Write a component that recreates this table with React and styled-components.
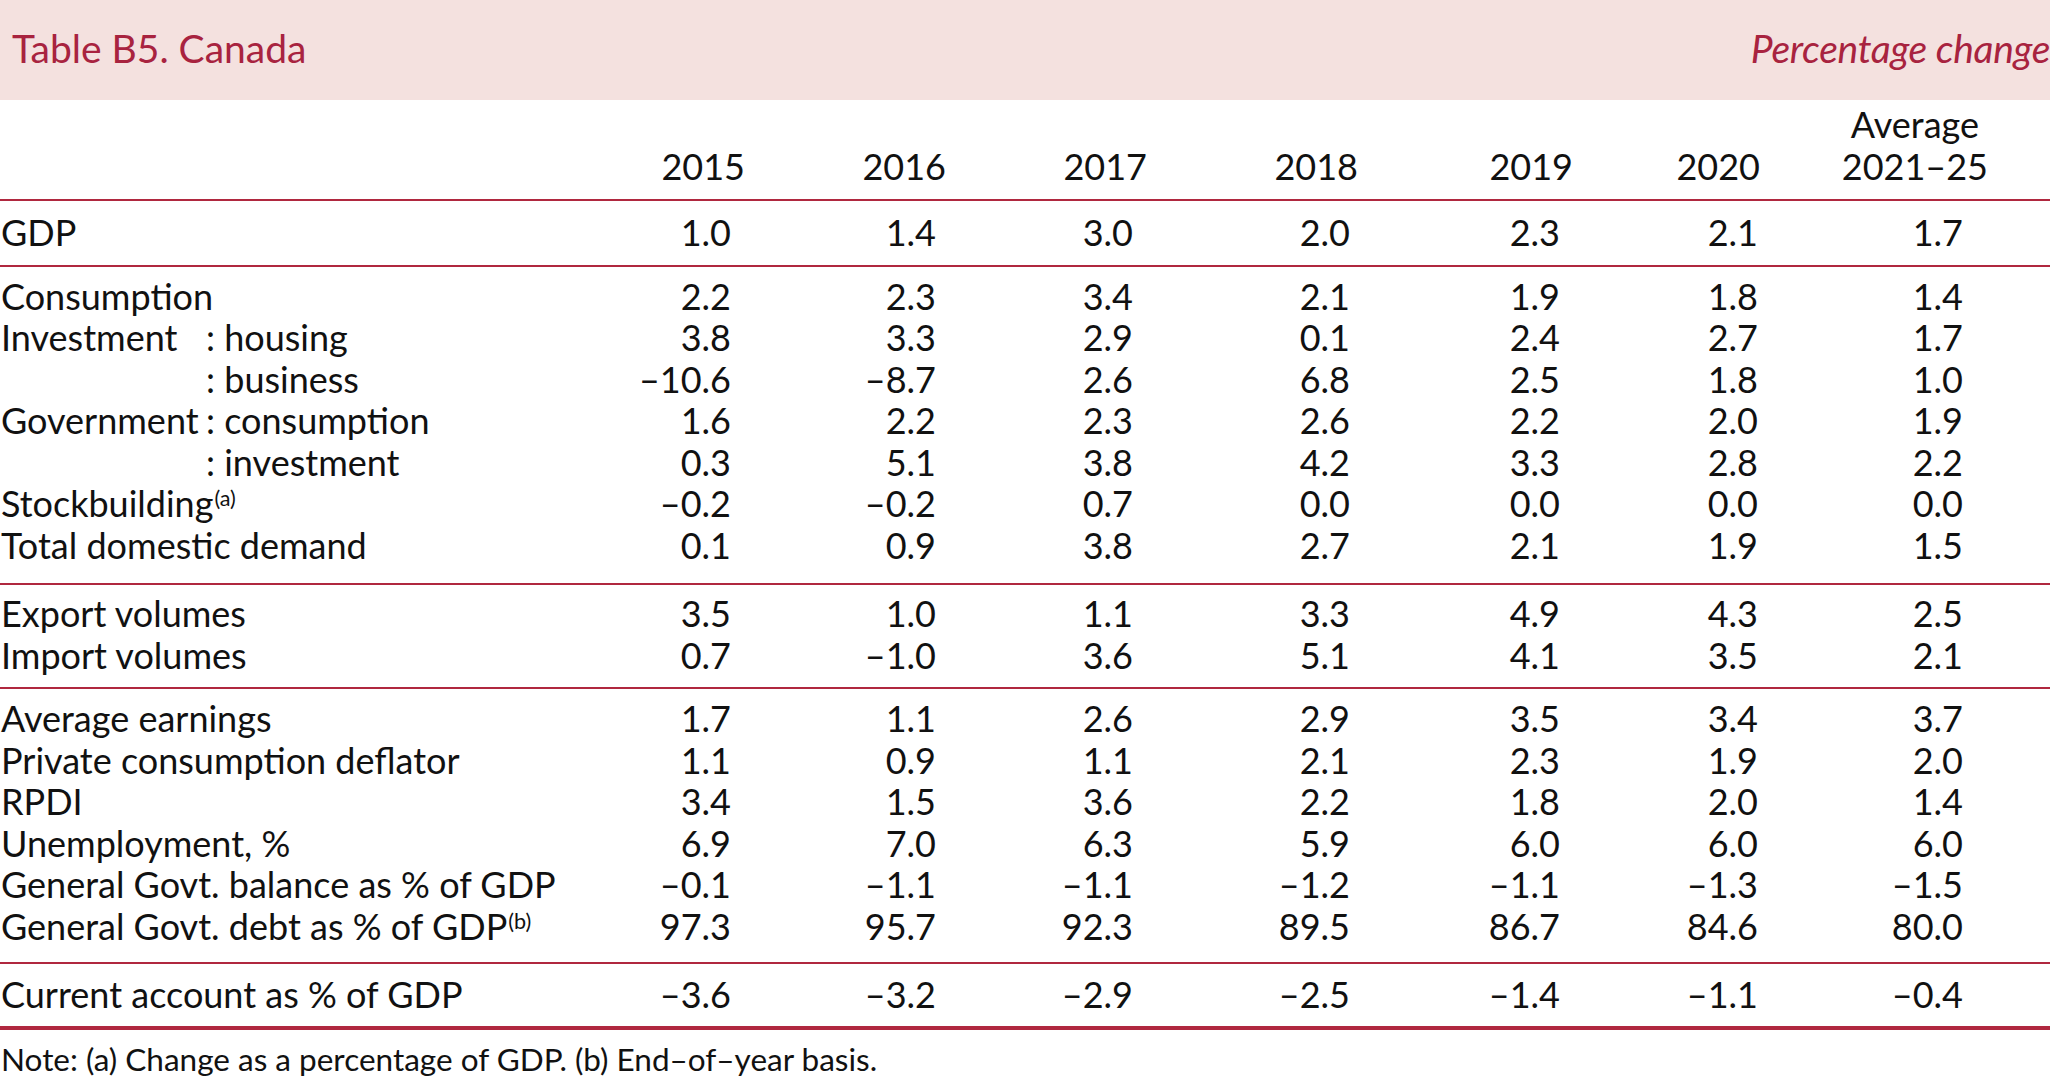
import React from 'react';
import styled, { createGlobalStyle, css } from 'styled-components';

const GlobalStyle = createGlobalStyle`
  html, body {
    margin: 0;
    padding: 0;
    background: #ffffff;
  }
  body {
    font-family: Lato, "Open Sans", sans-serif;
    color: #111111;
  }
`;

// right-edge inset of the figures, per column (px)
const columns = [
    { head: '2015', inset: 14 },
    { head: '2016', inset: 10 },
    { head: '2017', inset: 14 },
    { head: '2018', inset: 8 },
    { head: '2019', inset: 13 },
    { head: '2020', inset: 2 },
    { head: '2021–25', over: 'Average', inset: 25 },
];

const sections = [
    {
        pad: [11, 11],
        rows: [
            { label: 'GDP', values: ['1.0', '1.4', '3.0', '2.0', '2.3', '2.1', '1.7'] },
        ],
    },
    {
        pad: [9, 17],
        rows: [
            { label: 'Consumption', values: ['2.2', '2.3', '3.4', '2.1', '1.9', '1.8', '1.4'] },
            { label: 'Investment', sub: 'housing', values: ['3.8', '3.3', '2.9', '0.1', '2.4', '2.7', '1.7'] },
            { label: '', sub: 'business', values: ['–10.6', '–8.7', '2.6', '6.8', '2.5', '1.8', '1.0'] },
            { label: 'Government', sub: 'consumption', values: ['1.6', '2.2', '2.3', '2.6', '2.2', '2.0', '1.9'] },
            { label: '', sub: 'investment', values: ['0.3', '5.1', '3.8', '4.2', '3.3', '2.8', '2.2'] },
            { label: 'Stockbuilding', note: '(a)', values: ['–0.2', '–0.2', '0.7', '0.0', '0.0', '0.0', '0.0'] },
            { label: 'Total domestic demand', values: ['0.1', '0.9', '3.8', '2.7', '2.1', '1.9', '1.5'] },
        ],
    },
    {
        pad: [8, 11],
        rows: [
            { label: 'Export volumes', values: ['3.5', '1.0', '1.1', '3.3', '4.9', '4.3', '2.5'] },
            { label: 'Import volumes', values: ['0.7', '–1.0', '3.6', '5.1', '4.1', '3.5', '2.1'] },
        ],
    },
    {
        pad: [9, 15],
        rows: [
            { label: 'Average earnings', values: ['1.7', '1.1', '2.6', '2.9', '3.5', '3.4', '3.7'] },
            { label: 'Private consumption deflator', values: ['1.1', '0.9', '1.1', '2.1', '2.3', '1.9', '2.0'] },
            { label: 'RPDI', values: ['3.4', '1.5', '3.6', '2.2', '1.8', '2.0', '1.4'] },
            { label: 'Unemployment, %', values: ['6.9', '7.0', '6.3', '5.9', '6.0', '6.0', '6.0'] },
            { label: 'General Govt. balance as % of GDP', values: ['–0.1', '–1.1', '–1.1', '–1.2', '–1.1', '–1.3', '–1.5'] },
            { label: 'General Govt. debt as % of GDP', note: '(b)', values: ['97.3', '95.7', '92.3', '89.5', '86.7', '84.6', '80.0'] },
        ],
    },
    {
        pad: [10, 10],
        heavy: true,
        rows: [
            { label: 'Current account as % of GDP', values: ['–3.6', '–3.2', '–2.9', '–2.5', '–1.4', '–1.1', '–0.4'] },
        ],
    },
];

const rule = '#b0283f';

const grid = css`
    display: grid;
    grid-template-columns: 545px 200px 201px 201px 211px 215px 187px 228px;
`;

const Page = styled.div`
    width: 2050px;
    overflow: hidden;
`;

const Banner = styled.div`
    display: flex;
    align-items: flex-start;
    height: 100px;
    box-sizing: border-box;
    padding: 24px 0 0 12px;
    background: #f4e1df;
    color: #a8233f;
    font-size: 39px;
    line-height: 48px;
    overflow: hidden;
    white-space: nowrap;
`;

const Title = styled.div`
    flex: 0 0 auto;
`;

const Unit = styled.div`
    margin-left: auto;
    margin-right: 0;
    font-style: italic;
    letter-spacing: -0.3px;
`;

const HeadRow = styled.div`
    ${grid};
    align-items: end;
    height: 101px;
    box-sizing: border-box;
    padding-bottom: 12px;
    border-bottom: 2px solid ${rule};
    font-size: 36px;
    line-height: 42px;
`;

const HeadCell = styled.div`
    text-align: right;
`;

const Stack = styled.span`
    display: inline-block;
    text-align: center;
`;

const Section = styled.div`
    padding: ${p => p.$pad[0]}px 0 ${p => p.$pad[1]}px;
    border-bottom: ${p => (p.$heavy ? 4 : 2)}px solid ${rule};
`;

const Row = styled.div`
    ${grid};
    font-size: 36px;
    line-height: 41.5px;
`;

const LabelCell = styled.div`
    display: flex;
    white-space: nowrap;
    padding-left: 1px;
`;

const Main = styled.span`
    flex: 0 0 ${p => (p.$split ? '205px' : 'auto')};
`;

const Sub = styled.span`
    white-space: pre;
`;

const Note = styled.sup`
    font-size: 0.6em;
    vertical-align: 0.5em;
    line-height: 0;
    margin-left: 1px;
`;

const NumCell = styled.div`
    text-align: right;
    padding-right: ${p => p.$inset}px;
`;

const Footnote = styled.div`
    margin-top: 11px;
    padding-left: 1px;
    font-size: 31.5px;
    line-height: 36px;
`;

const App = () => (
    <Page>
        <GlobalStyle />
        <Banner>
            <Title>Table B5. Canada</Title>
            <Unit>Percentage change</Unit>
        </Banner>

        <HeadRow>
            <div />
            {columns.map(col => (
                <HeadCell key={col.head}>
                    {col.over ? (
                        <Stack>
                            {col.over}
                            <br />
                            {col.head}
                        </Stack>
                    ) : col.head}
                </HeadCell>
            ))}
        </HeadRow>

        {sections.map((section, i) => (
            <Section key={i} $pad={section.pad} $heavy={section.heavy}>
                {section.rows.map((row, j) => (
                    <Row key={j}>
                        <LabelCell>
                            <Main $split={!!row.sub}>
                                {row.label}
                                {row.note && <Note>{row.note}</Note>}
                            </Main>
                            {row.sub && <Sub>{': ' + row.sub}</Sub>}
                        </LabelCell>
                        {row.values.map((v, k) => (
                            <NumCell key={k} $inset={columns[k].inset}>{v}</NumCell>
                        ))}
                    </Row>
                ))}
            </Section>
        ))}

        <Footnote>Note: (a) Change as a percentage of GDP. (b) End–of–year basis.</Footnote>
    </Page>
);

export default App;
